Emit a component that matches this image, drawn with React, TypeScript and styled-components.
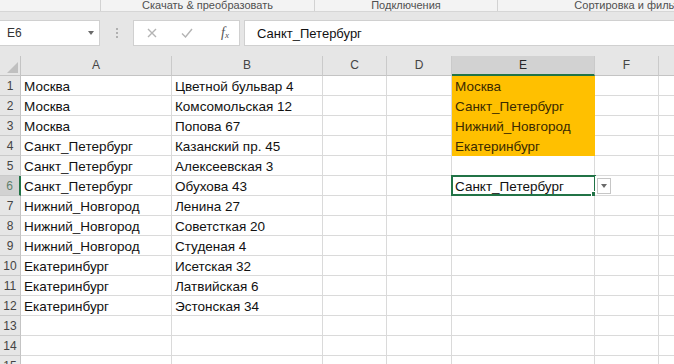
import React from "react";
import styled, {createGlobalStyle} from "styled-components";

const GlobalStyle = createGlobalStyle`
  html, body {
    margin: 0;
    padding: 0;
    background: #ffffff;
    overflow: hidden;
  }
  body {
    font-family: "Liberation Sans", Arial, sans-serif;
  }
`;

const GREEN = "#217346";
const ORANGE = "#ffc000";

const columns = [
  {name: "A", width: 151},
  {name: "B", width: 151},
  {name: "C", width: 64},
  {name: "D", width: 65},
  {name: "E", width: 143},
  {name: "F", width: 64},
  {name: "G", width: 64},
];

const data: string[][] = [
  ["Москва", "Цветной бульвар 4", "", "", "Москва"],
  ["Москва", "Комсомольская 12", "", "", "Санкт_Петербург"],
  ["Москва", "Попова 67", "", "", "Нижний_Новгород"],
  ["Санкт_Петербург", "Казанский пр. 45", "", "", "Екатеринбург"],
  ["Санкт_Петербург", "Алексеевская 3", "", "", ""],
  ["Санкт_Петербург", "Обухова 43", "", "", "Санкт_Петербург"],
  ["Нижний_Новгород", "Ленина 27", "", "", ""],
  ["Нижний_Новгород", "Советсткая 20", "", "", ""],
  ["Нижний_Новгород", "Студеная 4", "", "", ""],
  ["Екатеринбург", "Исетская 32", "", "", ""],
  ["Екатеринбург", "Латвийская 6", "", "", ""],
  ["Екатеринбург", "Эстонская 34", "", "", ""],
  ["", "", "", "", ""],
  ["", "", "", "", ""],
  ["", "", "", "", ""],
];

const ribbonGroups = [
  {label: "", width: 101},
  {label: "Скачать & преобразовать", width: 214},
  {label: "Подключения", width: 183},
  {label: "Сортировка и фильтр", width: 264},
];

export default function App() {
  return (
    <Window>
      <GlobalStyle/>
      <Ribbon>
        {ribbonGroups.map((g, i) => (
          <RibbonGroup key={i} $width={g.width}>
            <span>{g.label}</span>
          </RibbonGroup>
        ))}
      </Ribbon>

      <FormulaArea>
        <NameBox>
          <span>E6</span>
          <Caret/>
        </NameBox>
        <Grip>
          <i/><i/><i/>
        </Grip>
        <FormulaButtons>
          <svg width="10" height="10" viewBox="0 0 10 10">
            <path d="M1 1 L9 9 M9 1 L1 9" stroke="#b4b4b4" strokeWidth="1.4" fill="none"/>
          </svg>
          <svg width="12" height="10" viewBox="0 0 12 10">
            <path d="M1 5.5 L4.5 9 L11 1" stroke="#b4b4b4" strokeWidth="1.4" fill="none"/>
          </svg>
          <Fx>f<sub>x</sub></Fx>
        </FormulaButtons>
        <FormulaInput>Санкт_Петербург</FormulaInput>
      </FormulaArea>

      <Sheet $cols={columns.map(c => c.width + "px").join(" ")}>
        <Corner/>
        {columns.map(c => (
          <ColHeader key={c.name} $active={c.name === "E"}>{c.name === "G" ? "" : c.name}</ColHeader>
        ))}
        {data.map((row, r) => (
          <React.Fragment key={r}>
            <RowHeader $active={r === 5}>{r + 1}</RowHeader>
            {columns.map((c, ci) => {
              const value = row[ci] ?? "";
              const filled = ci === 4 && r < 4;
              const selected = ci === 4 && r === 5;
              return (
                <Cell key={c.name} $fill={filled ? ORANGE : undefined}>
                  {value}
                  {selected && (
                    <>
                      <Selection><Handle/></Selection>
                      <DropButton><Caret/></DropButton>
                    </>
                  )}
                </Cell>
              );
            })}
          </React.Fragment>
        ))}
      </Sheet>
    </Window>
  );
}

const Window = styled.div`
  width: 674px;
  height: 364px;
  overflow: hidden;
  display: flex;
  flex-direction: column;
  background: #e6e6e6;
`;

const Ribbon = styled.div`
  height: 12px;
  display: flex;
  background: #f3f3f3;
  border-bottom: 1px solid #d6d6d6;
  box-sizing: border-box;
  overflow: hidden;
  flex-shrink: 0;
`;

const RibbonGroup = styled.div<{$width: number}>`
  flex: 0 0 ${p => p.$width}px;
  display: flex;
  justify-content: center;
  align-items: flex-end;
  border-right: 1px solid #d2d2d2;
  box-sizing: border-box;
  white-space: nowrap;
  span {
    font-size: 11px;
    line-height: 14px;
    color: #505050;
    margin-bottom: -1px;
  }
`;

const FormulaArea = styled.div`
  height: 44px;
  flex-shrink: 0;
  box-sizing: border-box;
  padding: 8px 0 10px 0;
  display: flex;
  align-items: stretch;
`;

const NameBox = styled.div`
  width: 100px;
  background: #fff;
  border: 1px solid #d0d0d0;
  border-left: none;
  box-sizing: border-box;
  display: flex;
  align-items: center;
  justify-content: space-between;
  padding: 0 5px 0 7px;
  font-size: 12px;
  color: #333;
`;

const Caret = styled.span`
  width: 0;
  height: 0;
  border-left: 3px solid transparent;
  border-right: 3px solid transparent;
  border-top: 4px solid #6a6a6a;
`;

const Grip = styled.div`
  width: 33px;
  display: flex;
  flex-direction: column;
  align-items: center;
  justify-content: center;
  gap: 2px;
  i {
    width: 2px;
    height: 2px;
    background: #b0b0b0;
  }
`;

const FormulaButtons = styled.div`
  width: 107px;
  background: #fff;
  border: 1px solid #d0d0d0;
  box-sizing: border-box;
  display: flex;
  align-items: center;
  padding: 0 8px 0 13px;
  gap: 24px;
`;

const Fx = styled.span`
  font-family: "Liberation Serif", serif;
  font-style: italic;
  font-size: 14px;
  color: #555;
  margin-left: 4px;
  sub {
    font-size: 9px;
    vertical-align: -1px;
  }
`;

const FormulaInput = styled.div`
  flex: 1;
  margin-left: 4px;
  background: #fff;
  border: 1px solid #d0d0d0;
  border-right: none;
  box-sizing: border-box;
  display: flex;
  align-items: center;
  padding-left: 12px;
  font-size: 13px;
  color: #111;
`;

const Sheet = styled.div<{$cols: string}>`
  display: grid;
  grid-template-columns: 21px ${p => p.$cols};
  grid-auto-rows: 20px;
  background: #fff;
  font-size: 13.5px;
`;

const Corner = styled.div`
  background: #e6e6e6;
  border-right: 1px solid #c4c4c4;
  border-bottom: 1px solid #c4c4c4;
  box-sizing: border-box;
  position: relative;
  &:after {
    content: "";
    position: absolute;
    right: 2px;
    bottom: 2px;
    border-left: 11px solid transparent;
    border-bottom: 11px solid #c0c0c0;
  }
`;

const ColHeader = styled.div<{$active?: boolean}>`
  background: ${p => (p.$active ? "#d2d2d2" : "#e6e6e6")};
  border-right: 1px solid #cacaca;
  border-bottom: ${p => (p.$active ? `2px solid ${GREEN}` : "1px solid #c4c4c4")};
  box-sizing: border-box;
  text-align: center;
  font-size: 12px;
  line-height: 19px;
  color: ${p => (p.$active ? "#262626" : "#444")};
`;

const RowHeader = styled.div<{$active?: boolean}>`
  background: ${p => (p.$active ? "#d2d2d2" : "#e6e6e6")};
  border-right: ${p => (p.$active ? `2px solid ${GREEN}` : "1px solid #c4c4c4")};
  border-bottom: 1px solid #cacaca;
  box-sizing: border-box;
  text-align: center;
  font-size: 12px;
  line-height: 20px;
  color: ${p => (p.$active ? "#5f7f6c" : "#444")};
`;

const Cell = styled.div<{$fill?: string}>`
  position: relative;
  background: ${p => p.$fill ?? "#fff"};
  border-right: 1px solid ${p => p.$fill ?? "#dadada"};
  border-bottom: 1px solid ${p => p.$fill ?? "#dadada"};
  box-sizing: border-box;
  padding: 1px 0 0 3px;
  line-height: 19px;
  white-space: nowrap;
  color: ${p => (p.$fill ? "#3a2a00" : "#111")};
`;

const Selection = styled.div`
  position: absolute;
  left: -1px;
  top: -1px;
  right: -2px;
  bottom: -1px;
  border: 2px solid ${GREEN};
  pointer-events: none;
`;

const Handle = styled.div`
  position: absolute;
  right: -4px;
  bottom: -4px;
  width: 5px;
  height: 5px;
  background: ${GREEN};
  border: 1px solid #fff;
`;

const DropButton = styled.div`
  position: absolute;
  left: calc(100% + 3px);
  top: 2px;
  width: 14px;
  height: 16px;
  background: #fff;
  border: 1px solid #c6c6c6;
  box-sizing: border-box;
  display: flex;
  align-items: center;
  justify-content: center;
  z-index: 2;
`;
